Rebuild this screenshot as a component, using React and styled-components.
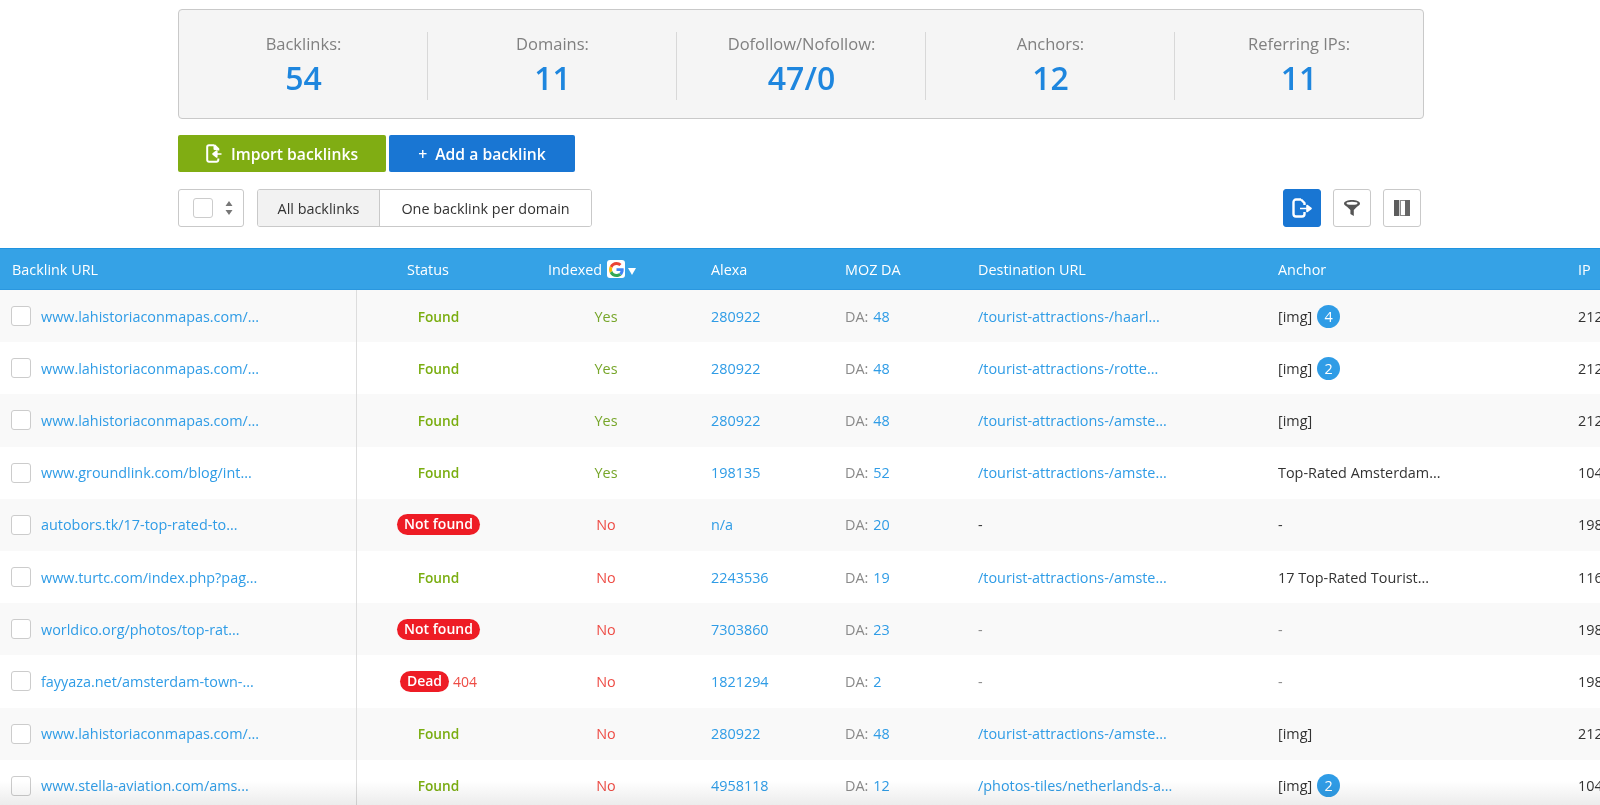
import React from "react";
import styled, { createGlobalStyle } from "styled-components";

const Colors = {
  Link: "#2f9ce6",
  Header: "#35a2e6",
  Blue: "#1976d3",
  Green: "#80ad13",
  Found: "#7bae12",
  Red: "#ee1c25",
  No: "#ee4c45",
  Border: "#c9c9c9",
};

const GRID = "357px 163px 172px 134px 133px 300px 300px 41px";

const GlobalStyle = createGlobalStyle`
  html, body {
    margin: 0;
    padding: 0;
    background: #fff;
    overflow: hidden;
  }
  body {
    font-family: "Open Sans", "Noto Sans", "Liberation Sans", sans-serif;
    font-size: 14.4px;
    color: #333;
  }
`;

const Page = styled.div`
  position: relative;
  width: 1600px;
  height: 805px;
  overflow: hidden;
`;

const Top = styled.div`
  padding: 9px 176px 0 178px;
`;

const StatsPanel = styled.div`
  display: grid;
  grid-template-columns: 249px 249px 249px 249px 1fr;
  height: 110px;
  box-sizing: border-box;
  padding: 22px 0;
  background: #f5f5f5;
  border: 1px solid ${Colors.Border};
  border-radius: 4px;
`;

const Stat = styled.div`
  display: flex;
  flex-direction: column;
  align-items: center;
  border-left: ${(p) => (p.$first ? "none" : "1px solid #d8d8d8")};
  margin-left: ${(p) => (p.$first ? 0 : -1)}px;
`;

const StatLabel = styled.div`
  font-size: 16.5px;
  line-height: 24px;
  color: #808080;
`;

const StatValue = styled.div`
  font-size: 32px;
  font-weight: 600;
  line-height: 44px;
  color: #1e86de;
`;

const ButtonRow = styled.div`
  display: flex;
  gap: 3px;
  margin-top: 16px;
`;

const ActionButton = styled.button`
  display: flex;
  align-items: center;
  justify-content: center;
  gap: ${(p) => p.$gap}px;
  width: ${(p) => p.$width}px;
  height: 37px;
  padding: 0;
  border: none;
  border-radius: 2px;
  background: ${(p) => p.$bg};
  color: #fff;
  font: 600 15.7px "Open Sans", sans-serif;
`;

const Toolbar = styled.div`
  display: flex;
  align-items: center;
  margin-top: 17px;
  height: 38px;
`;

const SelectBox = styled.div`
  display: flex;
  align-items: center;
  gap: 12px;
  box-sizing: border-box;
  width: 66px;
  height: 38px;
  padding-left: 14px;
  border: 1px solid ${Colors.Border};
  border-radius: 3px;
`;

const Check = styled.span`
  display: block;
  flex: none;
  box-sizing: border-box;
  width: 20px;
  height: 20px;
  background: #fff;
  border: 1px solid #ccc;
  border-radius: 3px;
`;

const Segments = styled.div`
  display: flex;
  height: 38px;
  margin-left: 13px;
  box-sizing: border-box;
  border: 1px solid ${Colors.Border};
  border-radius: 3px;
  overflow: hidden;
`;

const Segment = styled.div`
  display: flex;
  align-items: center;
  justify-content: center;
  width: ${(p) => p.$width}px;
  background: ${(p) => (p.$active ? "#f2f2f2" : "#fff")};
  border-left: ${(p) => (p.$active ? "none" : `1px solid ${Colors.Border}`)};
  color: #333;
`;

const IconGroup = styled.div`
  display: flex;
  gap: 12px;
  margin-left: auto;
  margin-right: 3px;
`;

const IconButton = styled.div`
  display: flex;
  align-items: center;
  justify-content: center;
  box-sizing: border-box;
  width: 38px;
  height: 38px;
  background: ${(p) => (p.$primary ? Colors.Blue : "#fff")};
  border: 1px solid ${(p) => (p.$primary ? Colors.Blue : Colors.Border)};
  border-radius: 3px;
`;

const Table = styled.div`
  margin-top: 21px;
`;

const HeaderRow = styled.div`
  display: grid;
  grid-template-columns: ${GRID};
  align-items: center;
  height: 42px;
  box-sizing: border-box;
  background: ${Colors.Header};
  border-top: 1px solid #1f93e0;
  border-bottom: 1px solid #2a97df;
  color: #fff;
`;

const HeaderCell = styled.div`
  display: flex;
  align-items: center;
  padding-left: ${(p) => p.$pad ?? 19}px;
  white-space: nowrap;
  overflow: hidden;
`;

const GoogleBox = styled.span`
  display: flex;
  align-items: center;
  justify-content: center;
  width: 18px;
  height: 18px;
  margin-left: 5px;
  background: #fff;
  border-radius: 3px;
`;

const Caret = styled.span`
  width: 0;
  height: 0;
  margin: 5px 0 0 3px;
  border-left: 4px solid transparent;
  border-right: 4px solid transparent;
  border-top: 7px solid #fff;
`;

const Row = styled.div`
  display: grid;
  grid-template-columns: ${GRID};
  align-items: center;
  height: 52.2px;
  background: ${(p) => (p.$odd ? "#f9f9f9" : "#fff")};
`;

const UrlCell = styled.div`
  display: flex;
  align-items: center;
  gap: 10px;
  height: 100%;
  padding-left: 11px;
  box-sizing: border-box;
  border-right: 1px solid #ddd;
`;

const CenterCell = styled.div`
  display: flex;
  align-items: center;
  justify-content: center;
  gap: 4px;
`;

const Cell = styled.div`
  display: flex;
  align-items: center;
  gap: 5px;
  padding-left: 19px;
  white-space: nowrap;
  overflow: hidden;
  color: ${(p) => p.$color || "#333"};
`;

const Link = styled.a`
  color: ${Colors.Link};
  text-decoration: none;
  white-space: nowrap;
`;

const Found = styled.span`
  color: ${Colors.Found};
  font-weight: 600;
  font-size: 13.7px;
`;

const Yes = styled.span`
  color: ${(p) => (p.$yes ? "#77a62a" : Colors.No)};
`;

const Pill = styled.span`
  display: inline-block;
  padding: 0 7px;
  height: 21px;
  line-height: 20px;
  border-radius: 11px;
  background: ${Colors.Red};
  color: #fff;
  font-weight: 600;
  font-size: 14px;
`;

const Code = styled.span`
  color: ${Colors.No};
  font-size: 14px;
`;

const Muted = styled.span`
  color: #8a8a8a;
`;

const Count = styled.span`
  display: flex;
  align-items: center;
  justify-content: center;
  width: 23px;
  height: 23px;
  border-radius: 50%;
  background: ${Colors.Link};
  color: #fff;
`;

const BottomFade = styled.div`
  position: absolute;
  left: 0;
  right: 0;
  bottom: 0;
  height: 24px;
  background: linear-gradient(#fff, #ececec);
  mix-blend-mode: multiply;
  pointer-events: none;
`;

const ImportIcon = () => (
  <svg width="16" height="19" viewBox="0 0 16 19" fill="none">
    <path d="M8.500 1.200H3a1.800 1.800 0 0 0-1.800 1.800v13A1.800 1.800 0 0 0 3 17.800h7.500a1.800 1.800 0 0 0 1.800-1.800v-1.500M8.500 1.200l3.800 3.800v1.600M8.500 1.200V5h3.800" stroke="#fff" strokeWidth="2" strokeLinejoin="round" />
    <path d="M15.500 10H10M10.800 7 7 10l3.800 3z" fill="#fff" stroke="#fff" strokeWidth="1.600" strokeLinejoin="round" />
  </svg>
);

const ExportIcon = () => (
  <svg width="20" height="20" viewBox="0 0 20 20" fill="none">
    <path d="M9 1.500H4A2.500 2.500 0 0 0 1.500 4v12A2.500 2.500 0 0 0 4 18.500h6a2.500 2.500 0 0 0 2.500-2.500v-2M9 1.500l3.500 3.500v2" stroke="#fff" strokeWidth="2.400" strokeLinejoin="round" />
    <path d="M8 10.500h7M15 7.500l4 3-4 3z" fill="#fff" stroke="#fff" strokeWidth="1.600" strokeLinejoin="round" />
  </svg>
);

const FunnelIcon = () => (
  <svg width="18" height="18" viewBox="0 0 18 18">
    <path d="M1 4.500C1 2.500 5 1 9 1s8 1.500 8 3.500c0 1.300-1.500 2.500-3 3.200L10.800 11v6L7.400 15v-4L4 7.700C2.500 7 1 5.800 1 4.500z" fill="#555" />
    <ellipse cx="9" cy="4.300" rx="5.500" ry="1.500" fill="#fff" />
  </svg>
);

const ColumnsIcon = () => (
  <svg width="16" height="16" viewBox="0 0 16 16">
    <rect x="0" y="0" width="5" height="16" fill="#5c5c5c" />
    <rect x="5.700" y="0" width="1" height="16" fill="#5c5c5c" />
    <rect x="6" y="0" width="5" height="1" fill="#8a8a8a" />
    <rect x="6" y="15" width="5" height="1" fill="#8a8a8a" />
    <rect x="11" y="0" width="5" height="16" fill="#666" />
  </svg>
);

const GoogleIcon = () => (
  <svg width="15" height="15" viewBox="0 0 48 48">
    <path fill="#ea4335" d="M24 9.500c3.500 0 6.700 1.200 9.200 3.600l6.900-6.900C35.900 2.400 30.500 0 24 0 14.600 0 6.500 5.400 2.600 13.200l8 6.200C12.500 13.600 17.800 9.500 24 9.500z" />
    <path fill="#4285f4" d="M47 24.500c0-1.600-.1-3.100-.4-4.500H24v9h13c-.6 3-2.300 5.500-4.800 7.200l7.700 6C44.400 37.900 47 31.800 47 24.500z" />
    <path fill="#fbbc05" d="M10.600 28.600C10.100 27.100 9.800 25.600 9.800 24s.3-3.100.8-4.600l-8-6.200C.9 16.400 0 20.100 0 24s.9 7.600 2.600 10.800l8-6.200z" />
    <path fill="#34a853" d="M24 48c6.500 0 11.900-2.100 15.900-5.800l-7.700-6c-2.200 1.400-4.900 2.300-8.200 2.300-6.200 0-11.500-4.100-13.400-9.900l-8 6.200C6.500 42.600 14.600 48 24 48z" />
  </svg>
);

const Sorter = () => (
  <svg width="8" height="14" viewBox="0 0 8 14" fill="#777">
    <path d="M4 0l3.500 5h-7zM4 14L.5 9h7z" />
  </svg>
);

const stats = [
  ["Backlinks:", "54"],
  ["Domains:", "11"],
  ["Dofollow/Nofollow:", "47/0"],
  ["Anchors:", "12"],
  ["Referring IPs:", "11"],
];

const rows = [
  { url: "www.lahistoriaconmapas.com/...", status: "found", yes: true, alexa: "280922", da: "48", dest: "/tourist-attractions-/haarl...", anchor: "[img]", count: 4, ip: "212" },
  { url: "www.lahistoriaconmapas.com/...", status: "found", yes: true, alexa: "280922", da: "48", dest: "/tourist-attractions-/rotte...", anchor: "[img]", count: 2, ip: "212" },
  { url: "www.lahistoriaconmapas.com/...", status: "found", yes: true, alexa: "280922", da: "48", dest: "/tourist-attractions-/amste...", anchor: "[img]", ip: "212" },
  { url: "www.groundlink.com/blog/int...", status: "found", yes: true, alexa: "198135", da: "52", dest: "/tourist-attractions-/amste...", anchor: "Top-Rated Amsterdam...", ip: "104" },
  { url: "autobors.tk/17-top-rated-to...", status: "missing", alexa: "n/a", da: "20", anchor: "-", ip: "198" },
  { url: "www.turtc.com/index.php?pag...", status: "found", alexa: "2243536", da: "19", dest: "/tourist-attractions-/amste...", anchor: "17 Top-Rated Tourist...", ip: "116" },
  { url: "worldico.org/photos/top-rat...", status: "missing", alexa: "7303860", da: "23", anchor: "-", grey: true, ip: "198" },
  { url: "fayyaza.net/amsterdam-town-...", status: "dead", alexa: "1821294", da: "2", anchor: "-", grey: true, ip: "198" },
  { url: "www.lahistoriaconmapas.com/...", status: "found", alexa: "280922", da: "48", dest: "/tourist-attractions-/amste...", anchor: "[img]", ip: "212" },
  { url: "www.stella-aviation.com/ams...", status: "found", alexa: "4958118", da: "12", dest: "/photos-tiles/netherlands-a...", anchor: "[img]", count: 2, ip: "104" },
];

const Status = ({ status }) => {
  if (status === "found") return <Found>Found</Found>;
  if (status === "missing") return <Pill>Not found</Pill>;
  return (
    <>
      <Pill>Dead</Pill>
      <Code>404</Code>
    </>
  );
};

const App = () => {
  return (
    <Page>
      <GlobalStyle />
      <Top>
        <StatsPanel>
          {stats.map(([label, value], i) => (
            <Stat key={label} $first={i === 0}>
              <StatLabel>{label}</StatLabel>
              <StatValue>{value}</StatValue>
            </Stat>
          ))}
        </StatsPanel>
        <ButtonRow>
          <ActionButton $width={208} $bg={Colors.Green} $gap={9}>
            <ImportIcon />
            Import backlinks
          </ActionButton>
          <ActionButton $width={186} $bg={Colors.Blue} $gap={8}>
            <span>+</span>
            <span>Add a backlink</span>
          </ActionButton>
        </ButtonRow>
        <Toolbar>
          <SelectBox>
            <Check />
            <Sorter />
          </SelectBox>
          <Segments>
            <Segment $active $width={121}>All backlinks</Segment>
            <Segment $width={211}>One backlink per domain</Segment>
          </Segments>
          <IconGroup>
            <IconButton $primary><ExportIcon /></IconButton>
            <IconButton><FunnelIcon /></IconButton>
            <IconButton><ColumnsIcon /></IconButton>
          </IconGroup>
        </Toolbar>
      </Top>
      <Table>
        <HeaderRow>
          <HeaderCell $pad={12}>Backlink URL</HeaderCell>
          <HeaderCell $pad={50}>Status</HeaderCell>
          <HeaderCell $pad={28}>
            Indexed
            <GoogleBox><GoogleIcon /></GoogleBox>
            <Caret />
          </HeaderCell>
          <HeaderCell>Alexa</HeaderCell>
          <HeaderCell>MOZ DA</HeaderCell>
          <HeaderCell>Destination URL</HeaderCell>
          <HeaderCell>Anchor</HeaderCell>
          <HeaderCell>IP</HeaderCell>
        </HeaderRow>
        {rows.map((row, i) => (
          <Row key={i} $odd={i % 2 === 0}>
            <UrlCell>
              <Check />
              <Link>{row.url}</Link>
            </UrlCell>
            <CenterCell><Status status={row.status} /></CenterCell>
            <CenterCell><Yes $yes={row.yes}>{row.yes ? "Yes" : "No"}</Yes></CenterCell>
            <Cell><Link>{row.alexa}</Link></Cell>
            <Cell>
              <Muted>DA:</Muted>
              <Link>{row.da}</Link>
            </Cell>
            <Cell $color={row.grey ? "#8a8a8a" : undefined}>
              {row.dest ? <Link>{row.dest}</Link> : "-"}
            </Cell>
            <Cell $color={row.grey ? "#8a8a8a" : undefined}>
              {row.anchor}
              {row.count && <Count>{row.count}</Count>}
            </Cell>
            <Cell>{row.ip}</Cell>
          </Row>
        ))}
      </Table>
      <BottomFade />
    </Page>
  );
};

export default App;
